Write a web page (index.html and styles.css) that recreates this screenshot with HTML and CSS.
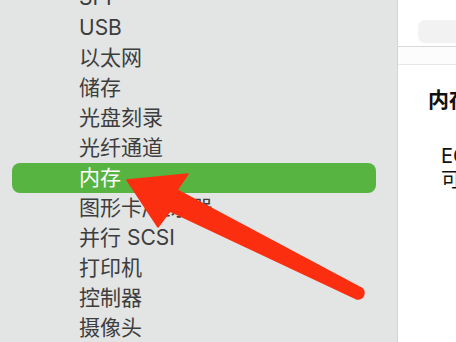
FILE: index.html
```html
<!DOCTYPE html>
<html lang="zh-CN">
<head>
    <meta charset="UTF-8">
    <title>系统信息 - 内存</title>
    <link rel="stylesheet" href="styles.css">
</head>
<body>
    <div class="window">
        <!-- Sidebar -->
        <aside class="sidebar">
            <ul class="side-list">
                <li class="side-item">SPI</li>
                <li class="side-item">USB</li>
                <li class="side-item">以太网</li>
                <li class="side-item">储存</li>
                <li class="side-item">光盘刻录</li>
                <li class="side-item">光纤通道</li>
                <li class="side-item selected">内存</li>
                <li class="side-item">图形卡/显示器</li>
                <li class="side-item">并行 SCSI</li>
                <li class="side-item">打印机</li>
                <li class="side-item">控制器</li>
                <li class="side-item">摄像头</li>
            </ul>
        </aside>

        <!-- Detail pane -->
        <main class="detail">
            <div class="toolbar">
                <div class="search-pill"></div>
            </div>
            <div class="column-band"></div>
            <h2 class="detail-title">内存</h2>
            <div class="detail-rows">
                <p>ECC：已停用</p>
                <p>可升级内存：否</p>
            </div>
        </main>

        <!-- Annotation arrow -->
        <svg class="annotation" width="456" height="342" viewBox="0 0 456 342">
            <path d="M127 180 L188 174 L177 190 L359 287 A6 6 0 0 1 357 299 L170 211 L158 227 Z"
                  fill="#fb2f10" stroke="#fb2f10" stroke-width="1.5" stroke-linejoin="round"/>
        </svg>
    </div>
</body>
</html>
```

FILE: styles.css
```css
* {
    margin: 0;
    padding: 0;
    box-sizing: border-box;
}

body {
    font-family: 'Inter', 'Noto Sans CJK SC', sans-serif;
    background: #ffffff;
    width: 456px;
    height: 342px;
    overflow: hidden;
}

.window {
    position: relative;
    display: flex;
    width: 456px;
    height: 342px;
    overflow: hidden;
}

/* Sidebar */
.sidebar {
    flex: 0 0 398px;
    background: #e3e4e4;
    border-right: 1px solid #d2d3d3;
    overflow: hidden;
}

.side-list {
    list-style: none;
    margin-top: -17px;
}

.side-item {
    height: 30px;
    line-height: 30px;
    margin-right: 21px;
    margin-left: 12px;
    padding-left: 67px;
    font-size: 21px;
    color: #3d3d3d;
    white-space: nowrap;
}

.side-item.selected {
    background: #58b441;
    color: #ffffff;
    border-radius: 8px;
}

/* Detail pane */
.detail {
    flex: 1;
    background: #ffffff;
    overflow: hidden;
    white-space: nowrap;
}

.toolbar {
    height: 47px;
    padding: 20px 0 0 20px;
    border-bottom: 1px solid #d9d9d9;
}

.search-pill {
    width: 80px;
    height: 23px;
    background: #f2f2f2;
    border-radius: 7px;
}

.column-band {
    height: 18px;
    background: #fcfcfc;
    border-bottom: 1px solid #e6e6e6;
}

.detail-title {
    margin-top: 20px;
    padding-left: 30px;
    height: 30px;
    line-height: 30px;
    font-size: 21px;
    font-weight: 700;
    color: #111111;
}

.detail-rows {
    margin-top: 29px;
    padding-left: 43px;
}

.detail-rows p {
    height: 24px;
    line-height: 24px;
    font-size: 20px;
    color: #111111;
}

/* Red annotation arrow over the list */
.annotation {
    position: absolute;
    top: 0;
    left: 0;
    pointer-events: none;
}
```
